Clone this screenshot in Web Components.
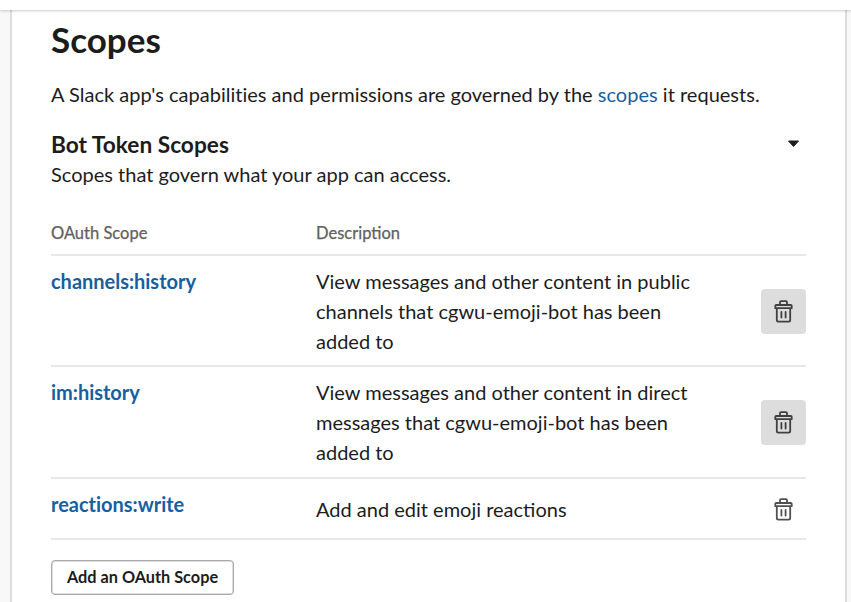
<!DOCTYPE html>
<html lang="en"><head><meta charset="utf-8"><title>Scopes</title>
<style>html,body{margin:0;height:602px;overflow:hidden;background:#f8f8f8}body{font-family:Lato,sans-serif;color:#1d1c1d}</style></head>
<body>
<top-bar></top-bar>
<scopes-panel>
<scope-row name="channels:history" active>View messages and other content in public channels that cgwu-emoji-bot has been added to</scope-row>
<scope-row name="im:history" active>View messages and other content in direct messages that cgwu-emoji-bot has been added to</scope-row>
<scope-row name="reactions:write" short>Add and edit emoji reactions</scope-row>
</scopes-panel>
<script>
class TopBar extends HTMLElement{constructor(){super();this.attachShadow({mode:'open'}).innerHTML=`<style>:host{display:block;position:relative;z-index:1;height:9.5px;background:#fff;box-shadow:0 1px 3px rgba(0,0,0,.2)}</style>`}}
customElements.define('top-bar',TopBar);
class TrashButton extends HTMLElement{constructor(){super();this.attachShadow({mode:'open'}).innerHTML=`
<style>:host{display:flex;box-sizing:border-box;width:45px;height:45px;padding-bottom:2px;border-radius:4px;align-items:center;justify-content:center;color:#505050}:host([active]){background:#ddd;color:#404040}svg{display:block}</style>
<svg width="19" height="24" viewBox="0 0 19 24" fill="none" stroke="currentColor" stroke-width="1.8" stroke-linecap="round" stroke-linejoin="round"><path d="M2.2 6H16.8Q17.7 6 17.7 6.8V9.2H1.3V6.8Q1.3 6 2.2 6ZM6 5.5V3.2Q6 2.2 7 2.2H12Q13 2.2 13 3.2V5.5M2.8 9.5V21Q2.8 22.6 4.4 22.6H14.6Q16.2 22.6 16.2 21V9.5M7.4 13V18.5M11.6 13V18.5"/></svg>`}}
customElements.define('trash-button',TrashButton);
class ScopeRow extends HTMLElement{constructor(){super();this.attachShadow({mode:'open'}).innerHTML=`
<style>:host{display:grid;grid-template-columns:265px 380px 1fr;box-sizing:border-box;height:111px;padding-top:10px;border-bottom:2px solid #e8e8e8;font-size:20px;line-height:30px}
:host([name="im:history"]){height:112px}
:host([short]){height:61px}b{color:#1660a0;letter-spacing:-.02px}:host([short]) .d{padding-top:5px}trash-button{justify-self:end;margin-top:23px}:host([short]) trash-button{margin-top:-2px}</style>
<b></b><div class="d"><slot></slot></div><trash-button></trash-button>`}
connectedCallback(){this.shadowRoot.querySelector('b').textContent=this.getAttribute('name');this.shadowRoot.querySelector('trash-button').toggleAttribute('active',this.hasAttribute('active'))}}
customElements.define('scope-row',ScopeRow);
class ScopesPanel extends HTMLElement{constructor(){super();this.attachShadow({mode:'open'}).innerHTML=`
<style>:host{display:block;box-sizing:border-box;height:620px;margin:0 4px 0 10px;padding:8px 39px 0 39px;background:#fff;border:solid #ddd;border-width:0 2px}
h1{margin:0;font-size:35px;line-height:42px;font-weight:700}p{margin:0;font-size:20px;line-height:30px}.i{margin-top:19.5px;letter-spacing:.013px}a{color:#1660a0}
.h{display:flex;justify-content:space-between;align-items:center;margin-top:21px;padding-right:6px}.h svg{margin-bottom:2px}.h+p{margin-top:-1px}h2{margin:0;font-size:22.7px;line-height:30px}
.t{display:grid;grid-template-columns:265px 1fr;height:67px;box-sizing:border-box;padding-top:32px;font-size:16.5px;line-height:24px;color:#616061;border-bottom:2px solid #e8e8e8;-webkit-text-stroke:.25px}
button{display:block;margin-top:20px;width:183px;height:35px;border:1.5px solid #aaa;box-shadow:inset 0 0 0 .5px #bbb;border-radius:4px;background:#fff;font:700 16.3px Lato,sans-serif;color:#1d1c1d;padding:0 0 2px}</style>
<h1>Scopes</h1><p class="i">A Slack app's capabilities and permissions are governed by the <a>scopes</a> it requests.</p>
<div class="h"><h2>Bot Token Scopes</h2><svg width="13" height="8"><path d="M1.5 1H11.5L6.5 6.5Z" fill="#1d1c1d" stroke="#1d1c1d" stroke-linejoin="round"/></svg></div>
<p>Scopes that govern what your app can access.</p><div class="t"><span>OAuth Scope</span><span>Description</span></div><slot></slot><button>Add an OAuth Scope</button>`}}
customElements.define('scopes-panel',ScopesPanel);
</script></body></html>
